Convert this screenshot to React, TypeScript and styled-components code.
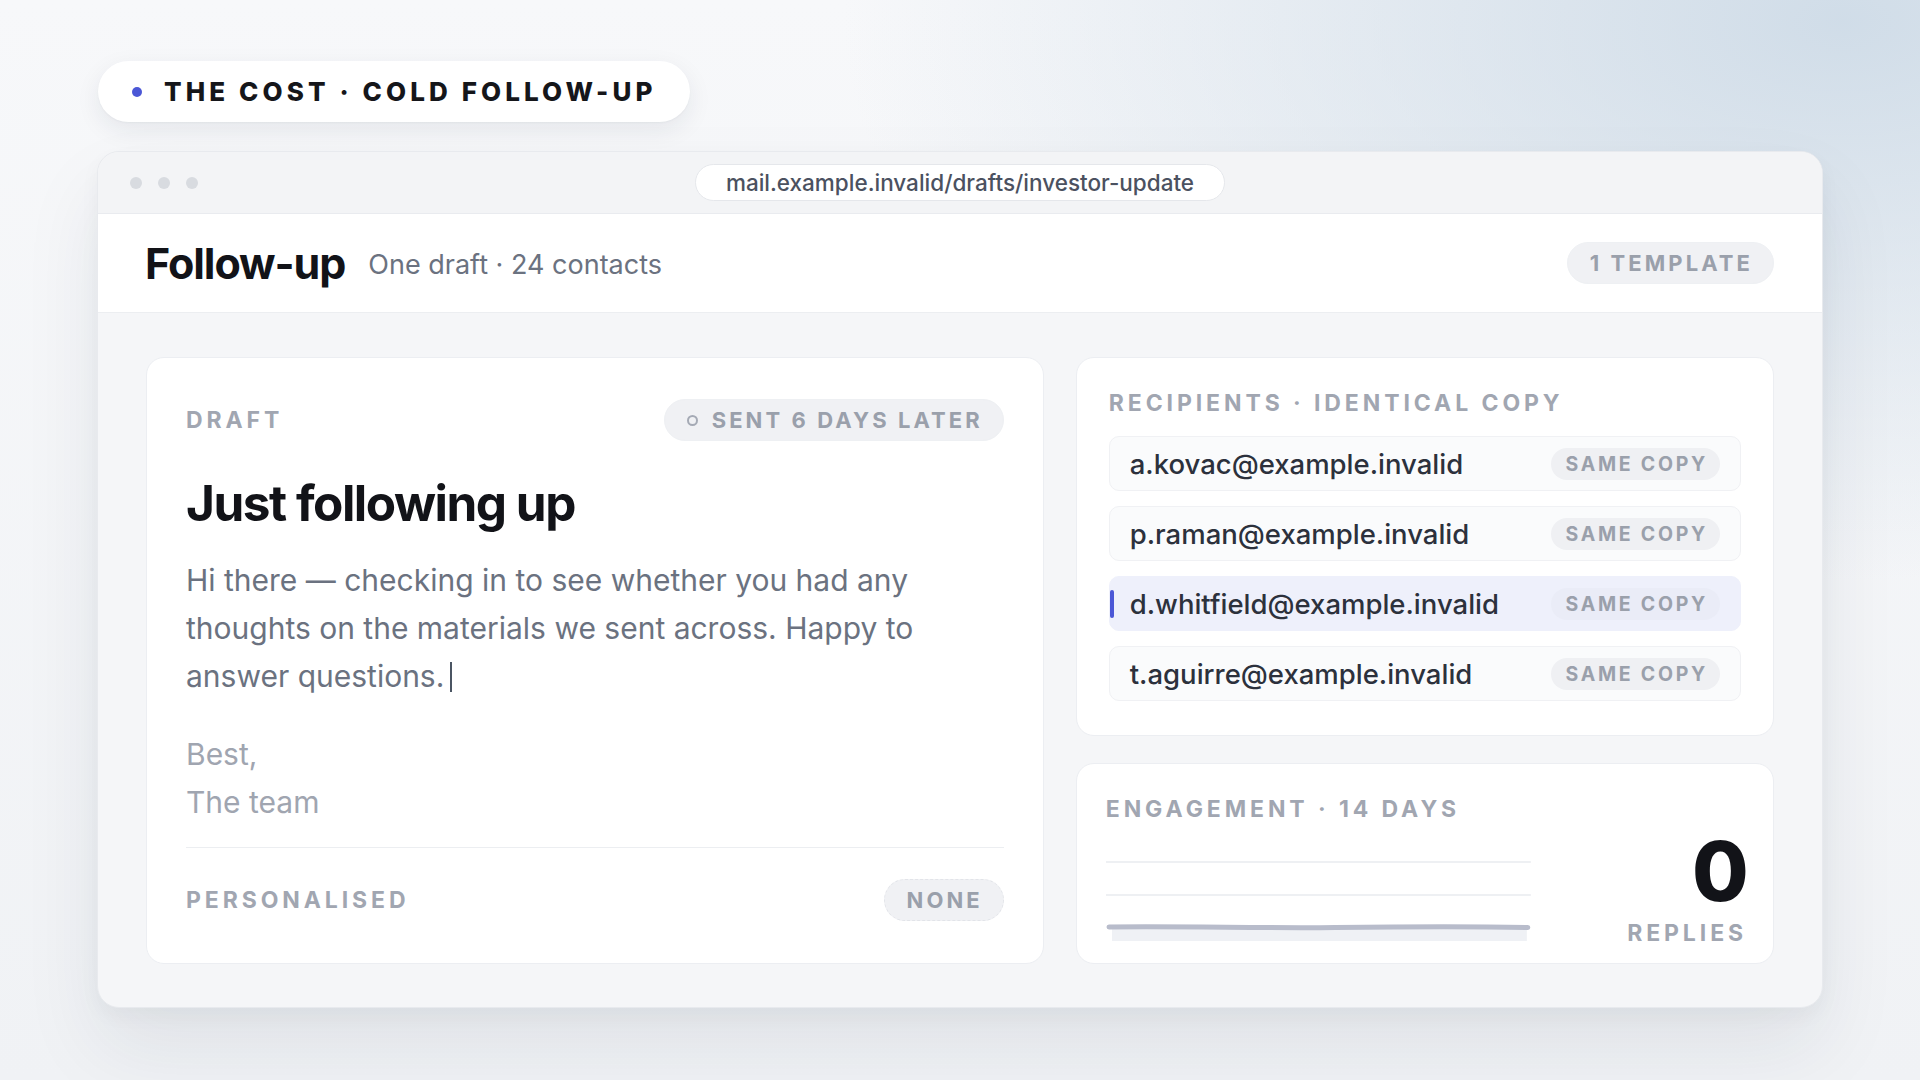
import styled, { createGlobalStyle } from 'styled-components'
import type { FC } from 'react'

const GlobalStyle = createGlobalStyle`
  html, body {
    margin: 0;
    padding: 0;
  }
  body {
    font-family: Inter, 'Noto Sans', 'Liberation Sans', sans-serif;
    background: #f4f5f8;
    -webkit-font-smoothing: antialiased;
  }
  * {
    box-sizing: border-box;
  }
`

const recipients = [
  { email: 'a.kovac@example.invalid', active: false },
  { email: 'p.raman@example.invalid', active: false },
  { email: 'd.whitfield@example.invalid', active: true },
  { email: 't.aguirre@example.invalid', active: false }
]

const App: FC = () => {
  return (
    <Page>
      <GlobalStyle />
      <Eyebrow>
        <EyebrowDot />
        THE COST · COLD FOLLOW-UP
      </Eyebrow>

      <Window>
        <TitleBar>
          <Dots>
            <Dot />
            <Dot />
            <Dot />
          </Dots>
          <UrlPill>mail.example.invalid/drafts/investor-update</UrlPill>
          <span />
        </TitleBar>

        <Header>
          <HeaderTitle>Follow-up</HeaderTitle>
          <HeaderMeta>One draft · 24 contacts</HeaderMeta>
          <Tag>1 TEMPLATE</Tag>
        </Header>

        <Main>
          <DraftCard>
            <DraftTop>
              <Label>DRAFT</Label>
              <Tag>
                <Ring />
                SENT 6 DAYS LATER
              </Tag>
            </DraftTop>
            <Subject>Just following up</Subject>
            <BodyText>
              Hi there — checking in to see whether you had any thoughts on the materials we sent across. Happy to
              answer questions.
              <Caret />
            </BodyText>
            <SignOff>
              Best,
              <br />
              The team
            </SignOff>
            <Divider />
            <DraftFooter>
              <Label>PERSONALISED</Label>
              <Tag $dashed>NONE</Tag>
            </DraftFooter>
          </DraftCard>

          <SideColumn>
            <RecipientsCard>
              <Label>RECIPIENTS · IDENTICAL COPY</Label>
              <RecipientList>
                {recipients.map((r) => (
                  <RecipientRow key={r.email} $active={r.active}>
                    {r.active && <ActiveBar />}
                    <Email>{r.email}</Email>
                    <SmallTag $active={r.active}>SAME COPY</SmallTag>
                  </RecipientRow>
                ))}
              </RecipientList>
            </RecipientsCard>

            <EngagementCard>
              <Label>ENGAGEMENT · 14 DAYS</Label>
              <EngagementBody>
                <Chart viewBox="0 0 426 115" preserveAspectRatio="none">
                  <line x1="0" y1="30" x2="426" y2="30" stroke="#eef0f3" strokeWidth="2" />
                  <line x1="0" y1="63" x2="426" y2="63" stroke="#eef0f3" strokeWidth="2" />
                  <rect x="6" y="97" width="416" height="12" fill="#eff1f5" />
                  <path
                    d="M3 95 C 80 94, 160 96.5, 230 95.5 S 360 94, 423 95.5"
                    fill="none"
                    stroke="#b8bccb"
                    strokeWidth="5"
                    strokeLinecap="round"
                  />
                </Chart>
                <Stat>
                  <StatValue>0</StatValue>
                  <Label>REPLIES</Label>
                </Stat>
              </EngagementBody>
            </EngagementCard>
          </SideColumn>
        </Main>
      </Window>
    </Page>
  )
}

const Page = styled.div`
  min-height: 100vh;
  padding: 61px 97px 60px 97px;
  background:
    radial-gradient(ellipse 1000px 560px at 96% 2%, rgba(206, 219, 231, 0.95) 0%, rgba(206, 219, 231, 0) 100%),
    linear-gradient(180deg, #f7f8fa 0%, #f0f2f5 100%);
`

const Eyebrow = styled.div`
  display: inline-flex;
  align-items: center;
  gap: 22px;
  height: 61px;
  padding: 0 34px 0 34px;
  margin-left: 1px;
  border-radius: 31px;
  background: #ffffff;
  box-shadow: 0 8px 24px rgba(30, 40, 60, 0.08), 0 1px 2px rgba(30, 40, 60, 0.04);
  font-size: 26px;
  font-weight: 800;
  letter-spacing: 0.158em;
  color: #15161a;
`

const EyebrowDot = styled.span`
  width: 10px;
  height: 10px;
  border-radius: 50%;
  background: #4b57d6;
`

const Window = styled.div`
  margin-top: 29px;
  width: 1726px;
  border-radius: 22px;
  border: 1px solid #e8eaee;
  background: #f5f6f8;
  overflow: hidden;
  box-shadow: 0 40px 80px rgba(30, 40, 60, 0.08), 0 8px 20px rgba(30, 40, 60, 0.04);
`

const TitleBar = styled.div`
  display: grid;
  grid-template-columns: 1fr auto 1fr;
  align-items: center;
  height: 62px;
  padding: 0 32px;
  background: #f3f4f6;
  border-bottom: 1px solid #e9ebef;
`

const Dots = styled.div`
  display: flex;
  gap: 16px;
`

const Dot = styled.span`
  width: 12px;
  height: 12px;
  border-radius: 50%;
  background: #d8dbe0;
`

const UrlPill = styled.div`
  height: 37px;
  display: flex;
  align-items: center;
  padding: 0 30px;
  border-radius: 19px;
  background: #ffffff;
  border: 1px solid #e5e7eb;
  font-size: 22.5px;
  font-weight: 500;
  color: #4b5160;
`

const Header = styled.div`
  display: flex;
  align-items: center;
  height: 99px;
  padding: 0 48px 0 47px;
  background: #ffffff;
  border-bottom: 1px solid #eceef1;
`

const HeaderTitle = styled.h1`
  margin: 0;
  font-size: 43px;
  font-weight: 700;
  letter-spacing: -0.025em;
  color: #121318;
`

const HeaderMeta = styled.span`
  margin-left: 23px;
  margin-top: 3px;
  flex: 1;
  font-size: 27px;
  color: #6b7280;
`

const Tag = styled.span<{ $dashed?: boolean }>`
  display: inline-flex;
  align-items: center;
  gap: 14px;
  height: 42px;
  padding: 0 20px 0 22px;
  border-radius: 21px;
  background: #f0f1f4;
  border: 1px ${(p) => (p.$dashed ? 'dashed #e2e4e9' : 'solid #eef0f3')};
  font-size: 22px;
  font-weight: 700;
  letter-spacing: 0.14em;
  color: #9aa0ab;
  white-space: nowrap;
`

const Ring = styled.span`
  width: 11px;
  height: 11px;
  border-radius: 50%;
  border: 2px solid #a5aab5;
`

const Main = styled.div`
  display: grid;
  grid-template-columns: 9fr 7fr;
  gap: 32px;
  padding: 44px 48px 43px 48px;
`

const Card = styled.div`
  background: #ffffff;
  border: 1px solid #eceef2;
  border-radius: 18px;
`

const DraftCard = styled(Card)`
  display: flex;
  flex-direction: column;
  padding: 41px 39px 42px 39px;
`

const DraftTop = styled.div`
  display: flex;
  align-items: center;
  justify-content: space-between;
`

const Label = styled.span`
  font-size: 23px;
  line-height: 28px;
  font-weight: 700;
  letter-spacing: 0.17em;
  color: #a1a6b1;
  white-space: nowrap;
`

const Subject = styled.h2`
  margin: 32px 0 0 0;
  font-size: 49.5px;
  line-height: 60px;
  font-weight: 700;
  letter-spacing: -0.03em;
  color: #121318;
`

const BodyText = styled.p`
  margin: 23px 0 0 0;
  font-size: 30px;
  line-height: 48px;
  color: #6b7280;
`

const Caret = styled.span`
  display: inline-block;
  width: 2px;
  height: 30px;
  margin-left: 6px;
  vertical-align: -5px;
  background: #4b5563;
`

const SignOff = styled.p`
  margin: 30px 0 0 0;
  font-size: 30px;
  line-height: 48px;
  color: #a0a5b0;
`

const Divider = styled.div`
  height: 1px;
  margin-top: 21px;
  background: #eceef1;
`

const DraftFooter = styled.div`
  display: flex;
  align-items: center;
  justify-content: space-between;
  margin-top: 31px;
`

const SideColumn = styled.div`
  display: flex;
  flex-direction: column;
  gap: 27px;
`

const RecipientsCard = styled(Card)`
  display: flex;
  flex-direction: column;
  padding: 31px 32px 34px 32px;
`

const RecipientList = styled.div`
  display: flex;
  flex-direction: column;
  gap: 15px;
  margin-top: 19px;
`

const RecipientRow = styled.div<{ $active: boolean }>`
  position: relative;
  display: flex;
  align-items: center;
  justify-content: space-between;
  height: 55px;
  padding: 0 20px;
  border-radius: 10px;
  background: ${(p) => (p.$active ? '#eef0fb' : '#fafbfc')};
  border: 1px solid ${(p) => (p.$active ? '#eef0fb' : '#f0f1f4')};
`

const ActiveBar = styled.span`
  position: absolute;
  left: 0;
  top: 13px;
  width: 4px;
  height: 28px;
  border-radius: 2px;
  background: #4b57d6;
`

const Email = styled.span`
  font-size: 27.5px;
  font-weight: 500;
  color: #2c313c;
`

const SmallTag = styled.span<{ $active: boolean }>`
  display: inline-flex;
  align-items: center;
  height: 32px;
  padding: 0 12px 0 14px;
  border-radius: 16px;
  background: ${(p) => (p.$active ? '#eaecf7' : '#eff0f3')};
  font-size: 19.5px;
  font-weight: 700;
  letter-spacing: 0.14em;
  color: #9aa0ab;
`

const EngagementCard = styled(Card)`
  flex: 1;
  display: flex;
  flex-direction: column;
  padding: 31px 30px 13px 29px;
`

const EngagementBody = styled.div`
  display: grid;
  grid-template-columns: 2fr 1fr;
  align-items: end;
  margin-top: 9px;
`

const Chart = styled.svg`
  display: block;
  width: 100%;
  height: 115px;
`

const Stat = styled.div`
  display: flex;
  flex-direction: column;
  align-items: flex-end;
  gap: 7px;
  margin-right: -4px;
`

const StatValue = styled.span`
  font-size: 82px;
  line-height: 80px;
  font-weight: 800;
  color: #121318;
  letter-spacing: -0.02em;
`

export default App
